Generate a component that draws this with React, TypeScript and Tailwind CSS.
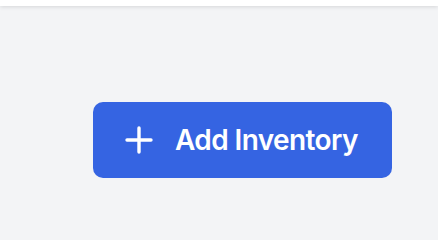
import React from 'react';

const PlusIcon = () => (
    <svg
        viewBox="0 0 28 28"
        className="w-[28px] h-[28px]"
        fill="none"
        stroke="currentColor"
        strokeWidth={3.4}
        strokeLinecap="round"
        aria-hidden="true"
    >
        <path d="M14 2v24M2 14h24" />
    </svg>
);

const App: React.FC = () => {
    return (
        <div className="min-h-screen bg-[#f3f4f6] font-['Inter',sans-serif]">
            <header className="h-[6px] bg-white shadow-[0_1px_4px_rgba(0,0,0,0.12)]" />
            <div className="flex justify-end pt-[96px] pr-[46px]">
                <button
                    type="button"
                    className="flex items-center h-[76px] w-[299px] pl-[32px] gap-[22px] rounded-[10px] bg-[#3564e2] text-white"
                >
                    <PlusIcon />
                    <span className="text-[28px] font-semibold leading-none tracking-[-0.6px]">
                        Add Inventory
                    </span>
                </button>
            </div>
        </div>
    );
};

export default App;
